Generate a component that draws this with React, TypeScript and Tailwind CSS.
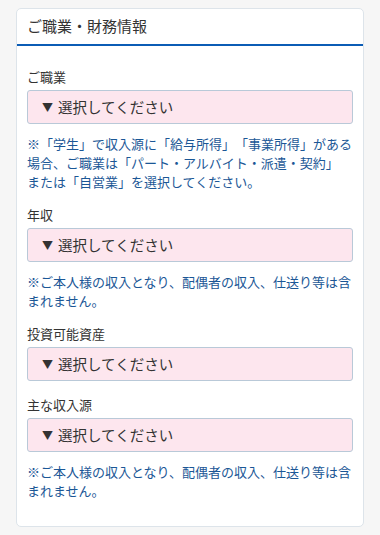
const font = { fontFamily: '"Noto Sans CJK JP", "Noto Sans", sans-serif' };

type FieldProps = { label: string; note?: React.ReactNode };

function Field({ label, note }: FieldProps) {
  return (
    <div className="flex flex-col">
      <div className="text-[13px] leading-[20px] text-[#333]">{label}</div>
      <div className="mt-[3px] flex h-[34px] items-center rounded-[3px] border border-[#b9c9d8] bg-[#fde6ee] pl-[14px] text-[14.5px] text-[#333]">
        <span className="mr-[5px] text-[11px]">▼</span>
        選択してください
      </div>
      {note && (
        <p className="mt-[10px] text-[13px] leading-[19px] text-[#1b5796] [text-spacing-trim:space-all]">
          {note}
        </p>
      )}
    </div>
  );
}

export default function App() {
  const incomeNote = "※ご本人様の収入となり、配偶者の収入、仕送り等は含まれません。";
  return (
    <div className="min-h-[535px] bg-[#f6f6f6] pt-[8px]" style={font}>
      <div className="mx-[16px] rounded-[5px] border border-[#dde4ea] bg-white">
        <div className="flex h-[37px] items-center border-b-2 border-[#0b5cb5] pl-[10px] text-[15px] text-[#333]">
          ご職業・財務情報
        </div>
        <div className="flex flex-col gap-[14px] px-[10px] pb-[26px] pt-[21px]">
          <Field
            label="ご職業"
            note={
              <>
                ※「学生」で収入源に「給与所得」「事業所得」がある場合、ご職業は「パート・アルバイト・派遣・契約」
                <br />
                または「自営業」を選択してください。
              </>
            }
          />
          <Field label="年収" note={incomeNote} />
          <Field label="投資可能資産" />
          <Field label="主な収入源" note={incomeNote} />
        </div>
      </div>
    </div>
  );
}
